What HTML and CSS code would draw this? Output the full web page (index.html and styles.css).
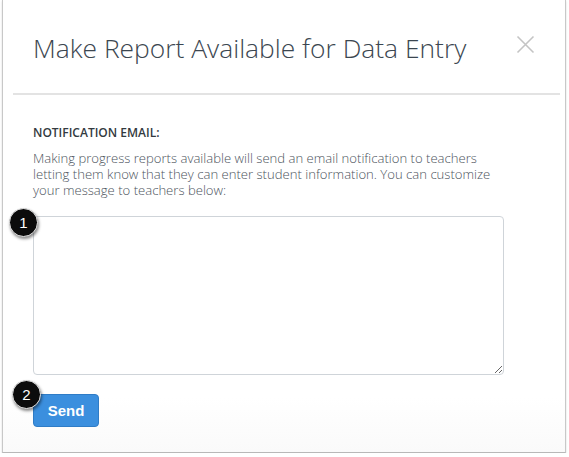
FILE: index.html
```html
<!DOCTYPE html>
<html>
<head>
<meta charset="utf-8">
<link rel="stylesheet" href="styles.css">
</head>
<body>
<div class="frame">
  <div class="header">
    <h1 class="title">Make Report Available for Data Entry</h1>
    <span class="close" aria-label="Close">
      <svg width="19" height="19" viewBox="0 0 19 19"><path d="M1.5 1.5 L17.5 17.5 M17.5 1.5 L1.5 17.5" stroke="#c4c4c4" stroke-width="1.6" fill="none"/></svg>
    </span>
  </div>
  <div class="divider"></div>
  <div class="content">
    <div class="label">NOTIFICATION EMAIL:</div>
    <p class="desc">Making progress reports available will send an email notification to teachers letting them know that they can enter student information. You can customize your message to teachers below:</p>
    <div class="field">
      <textarea class="message"></textarea>
      <span class="badge badge-1">1</span>
    </div>
    <div class="actions">
      <button class="send">Send</button>
      <span class="badge badge-2">2</span>
    </div>
  </div>
</div>
</body>
</html>
```

FILE: styles.css
```css
html, body {
  margin: 0;
  padding: 0;
  background: #ffffff;
}

.frame {
  margin-left: 2px;
  width: 562px;
  height: 452px;
  background: linear-gradient(to bottom, #ffffff 88%, #fafafa 100%);
  border-left: 1px solid #c8c8c8;
  border-right: 1px solid #c8c8c8;
  border-bottom: 1px solid #b8b8b8;
  box-shadow: 0 1px 2px rgba(0,0,0,0.15);
  font-family: "Open Sans", "Liberation Sans", sans-serif;
}

.header {
  display: flex;
  justify-content: space-between;
  align-items: flex-start;
  padding: 28px 30px 0 30px;
  height: 65px;
}

.title {
  margin: 0;
  font-weight: 300;
  font-size: 26.4px;
  line-height: 40px;
  color: #3b4650;
}

.close {
  margin-top: 7px;
  margin-right: 0;
  display: block;
  width: 19px;
  height: 19px;
}

.divider {
  margin: 0 5px 0 10px;
  border-top: 2px solid #e3e3e3;
}

.content {
  padding: 29px 30px 0 30px;
}

.label {
  font-size: 12px;
  font-weight: 600;
  color: #333a40;
  line-height: 18px;
}

.desc {
  margin: 8px 0 0 0;
  font-size: 13.1px;
  font-weight: 300;
  line-height: 16px;
  color: #4c545d;
  width: 480px;
}

.field {
  position: relative;
  margin-top: 18px;
}

.message {
  display: block;
  box-sizing: border-box;
  width: 471px;
  height: 159px;
  border: 1px solid #cfd4d9;
  border-radius: 4px;
  resize: vertical;
  margin: 0;
  font-family: "Open Sans", sans-serif;
}

.actions {
  position: relative;
  margin-top: 19px;
}

.send {
  display: block;
  width: 66px;
  height: 33px;
  background: #3b8fde;
  border: 1px solid #2f7cc6;
  border-radius: 4px;
  color: #ffffff;
  font-family: "Liberation Sans", Arial, sans-serif;
  font-weight: 700;
  font-size: 15px;
  padding: 0;
}

.badge {
  position: absolute;
  width: 27px;
  height: 27px;
  border-radius: 50%;
  background: #0c0c0c;
  border: 1px solid #e8e8e8;
  color: #ffffff;
  font-family: "Liberation Sans", Arial, sans-serif;
  font-size: 15px;
  line-height: 27px;
  text-align: center;
  box-shadow: 1px 2px 3px rgba(0,0,0,0.45);
}

.badge-1 {
  left: -24px;
  top: -8px;
}

.badge-2 {
  left: -21px;
  top: -14px;
}
```
